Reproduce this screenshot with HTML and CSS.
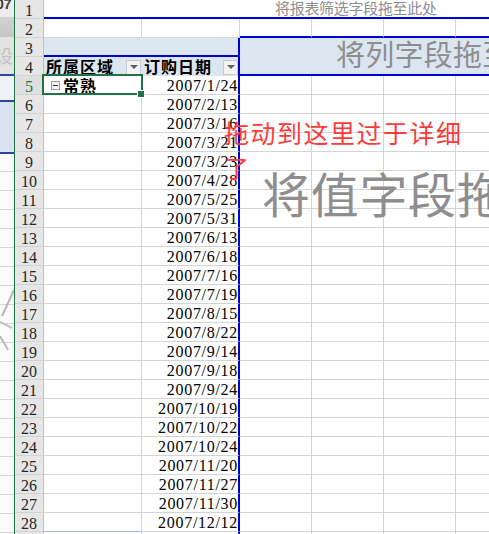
FILE: index.html
```html
<!DOCTYPE html>
<html lang="zh">
<head>
<meta charset="utf-8">
<title>数据透视表</title>
<link rel="stylesheet" href="styles.css">
</head>
<body>
<div class="app">
  <div class="ghost">
    <div class="g-top"><span class="g-txt">07</span></div>
    <div class="g-bar"></div>
    <div class="g-gray"><span class="g-char">设</span></div>
    <div class="g-line"></div>
    <div class="g-white"></div>
    <div class="g-line"></div>
    <div class="g-blue"></div>
    <div class="g-line"></div>
    <div class="g-rows">
      <svg class="g-strokes" width="14" height="70" viewBox="0 0 14 70">
        <path d="M14 2 L2 28" stroke="#b8b8b8" stroke-width="2" fill="none"/>
        <path d="M0 34 L12 40" stroke="#c4c4c4" stroke-width="2" fill="none"/>
        <path d="M0 48 L8 62" stroke="#bcbcbc" stroke-width="2" fill="none"/>
      </svg>
    </div>
  </div>
  <div class="divider"></div>
  <div class="sheet">
    <!-- row 1 -->
    <div class="rh">1</div>
    <div class="filter">将报表筛选字段拖至此处</div>
    <!-- row 2 -->
    <div class="rh">2</div>
    <div class="cell"></div><div class="cell"></div>
    <div class="cell top"></div><div class="cell top"></div><div class="cell top"></div><div class="cell top last"></div>
    <!-- rows 3-4 -->
    <div class="colarea"><span class="colarea-text">将列字段拖至此处</span></div>
    <div class="rh">3</div>
    <div class="band"></div>
    <div class="rh">4</div>
    <div class="hdr hdr-a"><span class="hdr-label">所属区域</span><span class="dd"></span></div>
    <div class="hdr hdr-b"><span class="hdr-label">订购日期</span><span class="dd"></span></div>
    <!-- row 5 -->
    <div class="rh sel">5</div>
    <div class="cell a active"><span class="minus"></span><span class="region">常熟</span><span class="selbox"></span><span class="handle"></span></div>
    <div class="cell b">2007/1/24</div><div class="cell"></div><div class="cell"></div><div class="cell"></div><div class="cell last"></div>
    <div class="rh">6</div><div class="cell a"></div><div class="cell b">2007/2/13</div><div class="cell"></div><div class="cell"></div><div class="cell"></div><div class="cell last"></div>
    <div class="rh">7</div><div class="cell a"></div><div class="cell b">2007/3/16</div><div class="cell"></div><div class="cell"></div><div class="cell"></div><div class="cell last"></div>
    <div class="rh">8</div><div class="cell a"></div><div class="cell b">2007/3/21</div><div class="cell"></div><div class="cell"></div><div class="cell"></div><div class="cell last"></div>
    <div class="rh">9</div><div class="cell a"></div><div class="cell b">2007/3/23</div><div class="cell"></div><div class="cell"></div><div class="cell"></div><div class="cell last"></div>
    <div class="rh">10</div><div class="cell a"></div><div class="cell b">2007/4/28</div><div class="cell"></div><div class="cell"></div><div class="cell"></div><div class="cell last"></div>
    <div class="rh">11</div><div class="cell a"></div><div class="cell b">2007/5/25</div><div class="cell"></div><div class="cell"></div><div class="cell"></div><div class="cell last"></div>
    <div class="rh">12</div><div class="cell a"></div><div class="cell b">2007/5/31</div><div class="cell"></div><div class="cell"></div><div class="cell"></div><div class="cell last"></div>
    <div class="rh">13</div><div class="cell a"></div><div class="cell b">2007/6/13</div><div class="cell"></div><div class="cell"></div><div class="cell"></div><div class="cell last"></div>
    <div class="rh">14</div><div class="cell a"></div><div class="cell b">2007/6/18</div><div class="cell"></div><div class="cell"></div><div class="cell"></div><div class="cell last"></div>
    <div class="rh">15</div><div class="cell a"></div><div class="cell b">2007/7/16</div><div class="cell"></div><div class="cell"></div><div class="cell"></div><div class="cell last"></div>
    <div class="rh">16</div><div class="cell a"></div><div class="cell b">2007/7/19</div><div class="cell"></div><div class="cell"></div><div class="cell"></div><div class="cell last"></div>
    <div class="rh">17</div><div class="cell a"></div><div class="cell b">2007/8/15</div><div class="cell"></div><div class="cell"></div><div class="cell"></div><div class="cell last"></div>
    <div class="rh">18</div><div class="cell a"></div><div class="cell b">2007/8/22</div><div class="cell"></div><div class="cell"></div><div class="cell"></div><div class="cell last"></div>
    <div class="rh">19</div><div class="cell a"></div><div class="cell b">2007/9/14</div><div class="cell"></div><div class="cell"></div><div class="cell"></div><div class="cell last"></div>
    <div class="rh">20</div><div class="cell a"></div><div class="cell b">2007/9/18</div><div class="cell"></div><div class="cell"></div><div class="cell"></div><div class="cell last"></div>
    <div class="rh">21</div><div class="cell a"></div><div class="cell b">2007/9/24</div><div class="cell"></div><div class="cell"></div><div class="cell"></div><div class="cell last"></div>
    <div class="rh">22</div><div class="cell a"></div><div class="cell b">2007/10/19</div><div class="cell"></div><div class="cell"></div><div class="cell"></div><div class="cell last"></div>
    <div class="rh">23</div><div class="cell a"></div><div class="cell b">2007/10/22</div><div class="cell"></div><div class="cell"></div><div class="cell"></div><div class="cell last"></div>
    <div class="rh">24</div><div class="cell a"></div><div class="cell b">2007/10/24</div><div class="cell"></div><div class="cell"></div><div class="cell"></div><div class="cell last"></div>
    <div class="rh">25</div><div class="cell a"></div><div class="cell b">2007/11/20</div><div class="cell"></div><div class="cell"></div><div class="cell"></div><div class="cell last"></div>
    <div class="rh">26</div><div class="cell a"></div><div class="cell b">2007/11/27</div><div class="cell"></div><div class="cell"></div><div class="cell"></div><div class="cell last"></div>
    <div class="rh">27</div><div class="cell a"></div><div class="cell b">2007/11/30</div><div class="cell"></div><div class="cell"></div><div class="cell"></div><div class="cell last"></div>
    <div class="rh">28</div><div class="cell a end"></div><div class="cell b">2007/12/12</div><div class="cell"></div><div class="cell"></div><div class="cell"></div><div class="cell last"></div>
    <div class="rh">29</div><div class="cell a"></div><div class="cell b"></div><div class="cell"></div><div class="cell"></div><div class="cell"></div><div class="cell last"></div>

    <div class="valtext">将值字段拖至此处</div>
    <div class="note">拖动到这里过于详细了</div>
  </div>
</div>
</body>
</html>
```

FILE: styles.css
```css
* { box-sizing: border-box; margin: 0; padding: 0; }

html, body {
  width: 489px;
  height: 534px;
  overflow: hidden;
  background: #ffffff;
}

body {
  font-family: "Liberation Serif", serif;
  color: #000;
}

.app {
  display: flex;
  height: 534px;
}

/* faded window ghost at the left edge */
.ghost {
  width: 14px;
  flex: none;
  display: flex;
  flex-direction: column;
  overflow: hidden;
  background: #fff;
}
.g-top {
  height: 17px;
  background: #ececec;
  overflow: hidden;
}
.g-txt {
  display: block;
  margin-left: -4px;
  margin-top: -3px;
  font: bold 14px "Liberation Sans", sans-serif;
  color: #3a3a3a;
  line-height: 14px;
}
.g-bar {
  height: 20px;
  background: linear-gradient(#d2d2d2, #c6c6c6);
}
.g-gray {
  height: 37px;
  background: #e3e3e3;
  overflow: hidden;
}
.g-char {
  display: block;
  margin-top: 9px;
  margin-left: -5px;
  font: 18px "Noto Sans CJK SC", sans-serif;
  line-height: 18px;
  color: #c2c2c2;
}
.g-line {
  height: 2px;
  background: #2a47a8;
}
.g-white {
  height: 24px;
  background: #eef2f7;
}
.g-blue {
  height: 50px;
  background: #d9e3ef;
}
.g-rows {
  flex: 1;
  background-color: #fbfbfb;
  background-image: repeating-linear-gradient(to bottom, transparent 0, transparent 17px, #d6d6d6 17px, #d6d6d6 18px, transparent 18px, transparent 19px);
  padding-top: 134px;
}
.g-strokes {
  display: block;
}

.divider {
  width: 1px;
  flex: none;
  background: #217346;
}

/* spreadsheet grid */
.sheet {
  position: relative;
  flex: 1;
  display: grid;
  grid-template-columns: 29px 98px 98px 72px 72px 72px 1fr;
  grid-auto-rows: 19px;
  align-content: start;
  overflow: hidden;
}

.rh {
  background: #e6e6e6;
  border-right: 1px solid #c0c0c0;
  border-bottom: 1px solid #d2d2d2;
  font-size: 16px;
  line-height: 18px;
  padding-top: 2px;
  text-align: center;
  color: #262626;
  overflow: visible;
}
.rh.sel {
  color: #217346;
  background: #dfdfdf;
}

.cell {
  border-right: 1px solid #d4d4d4;
  border-bottom: 1px solid #d4d4d4;
  background: #fff;
}
.cell.last { border-right: 0; }
.cell.top { border-bottom: 2px solid #0000d8; }
.cell.end { border-bottom-color: #9fb9e2; }

.cell.b {
  border-right: 2px solid #0000d8;
  text-align: right;
  font-size: 16px;
  line-height: 18px;
  padding-top: 1px;
  letter-spacing: 0.7px;
  white-space: nowrap;
}

/* filter drop zone (row 1) */
.filter {
  grid-column: 2 / -1;
  border-bottom: 2px solid #0000d8;
  padding-left: 231px;
  font-family: "Noto Sans CJK SC", sans-serif;
  font-size: 15px;
  line-height: 15px;
  letter-spacing: -0.3px;
  color: #8e8e8e;
  white-space: nowrap;
}

/* column drop zone (C3:F4) */
.colarea {
  grid-column: 4 / -1;
  grid-row: 3 / span 2;
  background: #dce6f1;
  border-bottom: 2px solid #0000d8;
  padding-left: 96px;
  padding-bottom: 6px;
  display: flex;
  align-items: center;
  overflow: hidden;
}
.colarea-text {
  font-family: "Noto Sans CJK SC", sans-serif;
  font-size: 29px;
  line-height: 30px;
  letter-spacing: 0.25px;
  color: #8e8e8e;
  white-space: nowrap;
}

/* row 3 band and row 4 labels */
.band {
  grid-column: 2 / span 2;
  background: #dce6f1;
  border-bottom: 2px solid #0000d8;
  border-right: 2px solid #0000d8;
}
.hdr {
  background: #dce6f1;
  display: flex;
  align-items: flex-end;
  justify-content: space-between;
  padding-left: 2px;
  padding-right: 1px;
  padding-bottom: 1px;
}
.hdr-b { border-right: 2px solid #0000d8; padding-right: 0; }
.hdr-label {
  font-family: "Noto Sans CJK SC", sans-serif;
  font-weight: 700;
  font-size: 16px;
  line-height: 18px;
  letter-spacing: 1px;
  white-space: nowrap;
  align-self: center;
}
.dd {
  width: 15px;
  height: 15px;
  background: #f3f3f3;
  border: 1px solid #c9c9c9;
  display: flex;
  align-items: center;
  justify-content: center;
}
.dd::after {
  content: "";
  width: 0;
  height: 0;
  border-left: 4px solid transparent;
  border-right: 4px solid transparent;
  border-top: 4px solid #5f5f5f;
  margin-top: -2px;
}

/* active cell A5 */
.cell.a.active {
  position: relative;
  display: flex;
  align-items: center;
  padding-left: 7px;
  overflow: visible;
}
.minus {
  width: 9px;
  height: 9px;
  border: 1px solid #9a9a9a;
  background: #f2f2f2;
  display: flex;
  align-items: center;
  justify-content: center;
  margin-right: 3px;
}
.minus::after {
  content: "";
  width: 5px;
  height: 1px;
  background: #333;
}
.region {
  font-family: "Noto Sans CJK SC", sans-serif;
  font-weight: 700;
  font-size: 16px;
  line-height: 18px;
  letter-spacing: 1px;
}
.selbox {
  position: absolute;
  left: -2px;
  top: -2px;
  right: -2px;
  bottom: -1px;
  border: 2px solid #217346;
  pointer-events: none;
}
.handle {
  position: absolute;
  right: -3px;
  bottom: -3px;
  width: 6px;
  height: 6px;
  background: #217346;
  outline: 1px solid #ffffff;
}

/* overlays */
.valtext {
  position: absolute;
  left: 247px;
  top: 168px;
  font-family: "Noto Sans CJK SC", sans-serif;
  font-size: 48px;
  line-height: 48px;
  letter-spacing: 0.7px;
  color: #8e8e8e;
  white-space: nowrap;
}
.note {
  position: absolute;
  left: 209px;
  top: 115px;
  width: 250px;
  font-family: "Noto Sans CJK SC", sans-serif;
  font-size: 25px;
  line-height: 35px;
  letter-spacing: 1.5px;
  color: #ff3b3b;
}
```
